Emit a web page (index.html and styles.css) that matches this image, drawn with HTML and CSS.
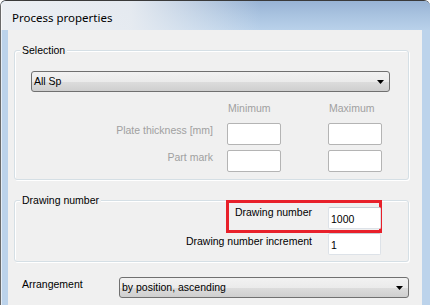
FILE: index.html
```html
<!DOCTYPE html>
<html lang="en">
<head>
    <meta charset="UTF-8">
    <title>Process properties</title>
    <link rel="stylesheet" href="styles.css">
</head>
<body>
    <div class="window">
        <div class="titlebar">
            <span class="title">Process properties</span>
        </div>

        <div class="frame">
            <div class="client">
                <fieldset class="group group-selection">
                    <legend>Selection</legend>
                    <div class="combo combo-selection">
                        <span class="combo-text">All Sp</span>
                        <svg class="arrow" width="7" height="4" viewBox="0 0 7 4"><polygon points="0,0 7,0 3.5,4" fill="#000"/></svg>
                    </div>
                    <div class="range-grid">
                        <span></span>
                        <span class="col-head">Minimum</span>
                        <span class="col-head">Maximum</span>

                        <label class="dim">Plate thickness [mm]</label>
                        <input class="field field-dim" type="text">
                        <input class="field field-dim" type="text">

                        <label class="dim">Part mark</label>
                        <input class="field field-dim" type="text">
                        <input class="field field-dim" type="text">
                    </div>
                </fieldset>

                <fieldset class="group group-drawing">
                    <legend>Drawing number</legend>
                    <div class="number-grid">
                        <div class="highlight"></div>
                        <label class="first-label">Drawing number</label>
                        <input class="field" type="text" value="1000">
                        <label>Drawing number increment</label>
                        <input class="field" type="text" value="1">
                    </div>
                </fieldset>

                <div class="arrange-row">
                    <label>Arrangement</label>
                    <div class="combo combo-arrange">
                        <span class="combo-text">by position, ascending</span>
                        <svg class="arrow" width="7" height="4" viewBox="0 0 7 4"><polygon points="0,0 7,0 3.5,4" fill="#000"/></svg>
                    </div>
                </div>
            </div>
        </div>
    </div>
</body>
</html>
```

FILE: styles.css
```css
* {
    box-sizing: border-box;
    margin: 0;
    padding: 0;
}

body {
    background: #fff;
    font-family: 'Liberation Sans', Arial, sans-serif;
    font-size: 10.5px;
    line-height: 13px;
    color: #000;
}

.window {
    width: 430px;
    height: 305px;
    display: flex;
    flex-direction: column;
    background: #bcd3eb;
    border-top: 1px solid #3a3a3a;
    border-left: 1px solid #6a6a6a;
    border-radius: 6px 6px 0 0;
    overflow: hidden;
}

.titlebar {
    height: 29px;
    flex: 0 0 29px;
    padding: 9px 0 0 11px;
    background:
        linear-gradient(90deg, rgba(236,239,243,1) 0, rgba(232,236,241,0.95) 130px, rgba(220,230,240,0) 260px),
        linear-gradient(180deg, #98b3d4 0, #a9c3e0 14px, #b9d1ea 100%);
    box-shadow: inset 1px 0 0 rgba(255,255,255,0.7);
}

.title {
    font-family: 'Noto Sans', 'Open Sans', sans-serif;
    font-size: 11.5px;
    line-height: 16px;
    color: #000;
}

.frame {
    flex: 1;
    display: flex;
    padding: 0 8px 0 7px;
    box-shadow: inset 1px 0 0 rgba(255,255,255,0.6);
}

.client {
    flex: 1;
    background: #f0f0f0;
    padding: 0 13px 0 6px;
}

/* group boxes */
.group {
    border: 1px solid #d5dfe5;
    border-radius: 3px;
    box-shadow: inset 1px 1px 0 #fff, 1px 1px 0 #fff;
    padding: 0;
    margin: 14px 0 0 0;
    min-inline-size: 0;
}

.group legend {
    margin-left: 5px;
    padding: 0 2px;
    line-height: 13px;
    background: #f0f0f0;
}

.group-selection {
    padding-top: 14px;
    padding-bottom: 7px;
}

.group-drawing {
    padding-bottom: 6px;
}

/* combo boxes */
.combo {
    height: 21px;
    display: flex;
    align-items: center;
    justify-content: space-between;
    padding: 0 5px 0 2px;
    border: 1px solid #707070;
    border-radius: 3px;
    background: linear-gradient(180deg, #f2f2f2 0, #ebebeb 50%, #dddddd 50%, #cfcfcf 100%);
}

.combo-text {
    white-space: nowrap;
}

.combo-selection {
    margin: 0 18px 0 16px;
}

.arrow {
    display: block;
    flex: 0 0 auto;
}

/* min / max grid */
.range-grid {
    display: grid;
    grid-template-columns: 212px 101px 54px;
    row-gap: 5px;
    margin-top: 10px;
}

.col-head {
    color: #a0a0a0;
    padding-left: 1px;
    margin-bottom: 3px;
}

.dim {
    color: #a0a0a0;
    text-align: right;
    padding: 1px 14px 0 0;
}

.field {
    width: 54px;
    height: 22px;
    border: 1px solid #dde2e8;
    border-top-color: #c9cfd6;
    border-radius: 2px;
    background: #fff;
    font-family: 'Liberation Sans', Arial, sans-serif;
    font-size: 10.5px;
    color: #000;
    padding: 2px 2px 0 2px;
    outline: none;
}

.field-dim {
    border-color: #b4b4b4;
}

/* drawing number grid */
.number-grid {
    position: relative;
    display: grid;
    grid-template-columns: 1fr 53px;
    column-gap: 16px;
    row-gap: 4px;
    margin-right: 27px;
}

.number-grid label {
    text-align: right;
    padding-top: 2px;
}

.number-grid .first-label {
    padding-top: 0;
    margin-top: -1px;
}

.number-grid .field {
    width: 53px;
    position: relative;
    z-index: 1;
}

.highlight {
    position: absolute;
    left: 211px;
    top: -7px;
    width: 156px;
    height: 33px;
    border: 3px solid #e8202a;
}

/* arrangement */
.arrange-row {
    display: flex;
    align-items: flex-start;
    margin-top: 15px;
    padding-left: 8px;
}

.arrange-row label {
    flex: 0 0 97px;
    padding-top: 1px;
}

.combo-arrange {
    flex: 1;
}
```
